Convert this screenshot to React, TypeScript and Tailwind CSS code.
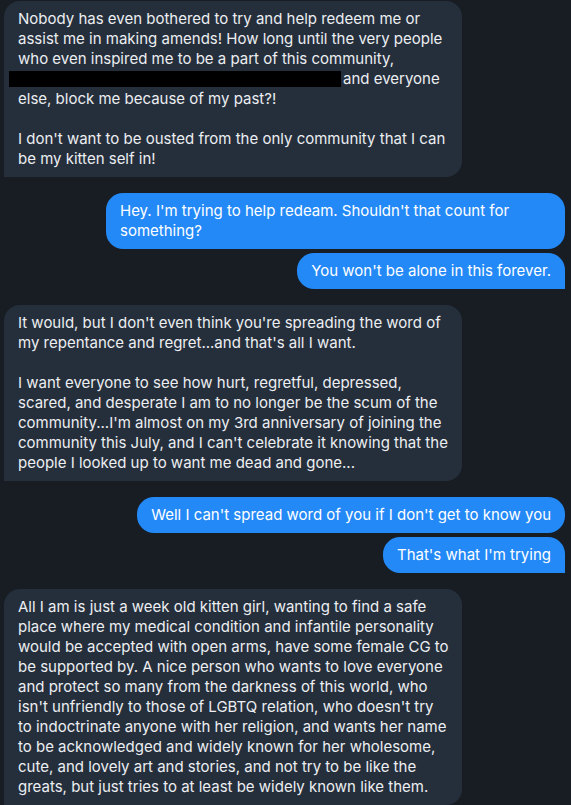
import React from "react";

type Msg = { from: "them" | "me"; last?: boolean; body: React.ReactNode };

const messages: Msg[] = [
  {
    from: "them",
    body: (
      <>
        Nobody has even bothered to try and help redeem me or assist me in making amends! How long until the very people who
        even inspired me to be a part of this community,{" "}
        <span className="-ml-[9px] mr-[2px] inline-block h-[16px] w-[332px] bg-black align-[-3px]" />
        and everyone else, block me because of my past?!
        <br />
        <br />
        I don't want to be ousted from the only community that I can be my kitten self in!
      </>
    ),
  },
  { from: "me", body: "Hey. I'm trying to help redeam. Shouldn't that count for something?" },
  { from: "me", last: true, body: "You won't be alone in this forever." },
  {
    from: "them",
    body: (
      <>
        It would, but I don't even think you're spreading the word of my repentance and regret...and that's all I want.
        <br />
        <br />
        I want everyone to see how hurt, regretful, depressed, scared, and desperate I am to no longer be the scum of the
        community...I'm almost on my 3rd anniversary of joining the community this July, and I can't celebrate it knowing
        that the people I looked up to want me dead and gone...
      </>
    ),
  },
  { from: "me", body: "Well I can't spread word of you if I don't get to know you" },
  { from: "me", last: true, body: "That's what I'm trying" },
  {
    from: "them",
    body: (
      <>
        All I am is just a week old kitten girl, wanting to find a safe place where my medical condition and infantile
        personality would be accepted with open arms, have some female CG to be supported by. A nice person who wants to love
        everyone and protect so many from the darkness of this world, who isn't unfriendly to those of LGBTQ relation, who
        doesn't try to indoctrinate anyone with her religion, and wants her name to be acknowledged and widely known for her
        wholesome, cute, and lovely art and stories, and not try to be like the greats, but just tries to at least be widely
        known like them.
      </>
    ),
  },
];

function Bubble({ msg }: { msg: Msg }) {
  if (msg.from === "them") {
    return (
      <div className="flex justify-start pl-[4px]">
        <div className="max-w-[458px] rounded-[16px] rounded-bl-none bg-[#252f3c] py-[8px] pl-[14px] pr-[13px] text-[15px] leading-[20px] text-[#eceef1]">
          {msg.body}
        </div>
      </div>
    );
  }
  return (
    <div className="flex justify-end pr-[6px]">
      <div
        className={
          msg.last
            ? "max-w-[459px] rounded-[17px] rounded-br-none bg-[#2389f7] px-[14px] py-[8px] text-[15px] leading-[20px] text-white"
            : "max-w-[459px] rounded-[17px] bg-[#2389f7] px-[14px] py-[8px] text-[15px] leading-[20px] text-white"
        }
      >
        {msg.body}
      </div>
    </div>
  );
}

export default function App() {
  return (
    <div
      className="h-[805px] w-[571px] overflow-hidden bg-[#181d24] pt-px"
      style={{ fontFamily: "Inter, 'Noto Sans', sans-serif" }}
    >
      <div className="flex flex-col">
        {messages.map((m, i) => {
          const prev = messages[i - 1];
          const gap = i === 0 ? "" : prev.from === m.from ? "mt-[4px]" : "mt-[16px]";
          return (
            <div key={i} className={gap}>
              <Bubble msg={m} />
            </div>
          );
        })}
      </div>
    </div>
  );
}
